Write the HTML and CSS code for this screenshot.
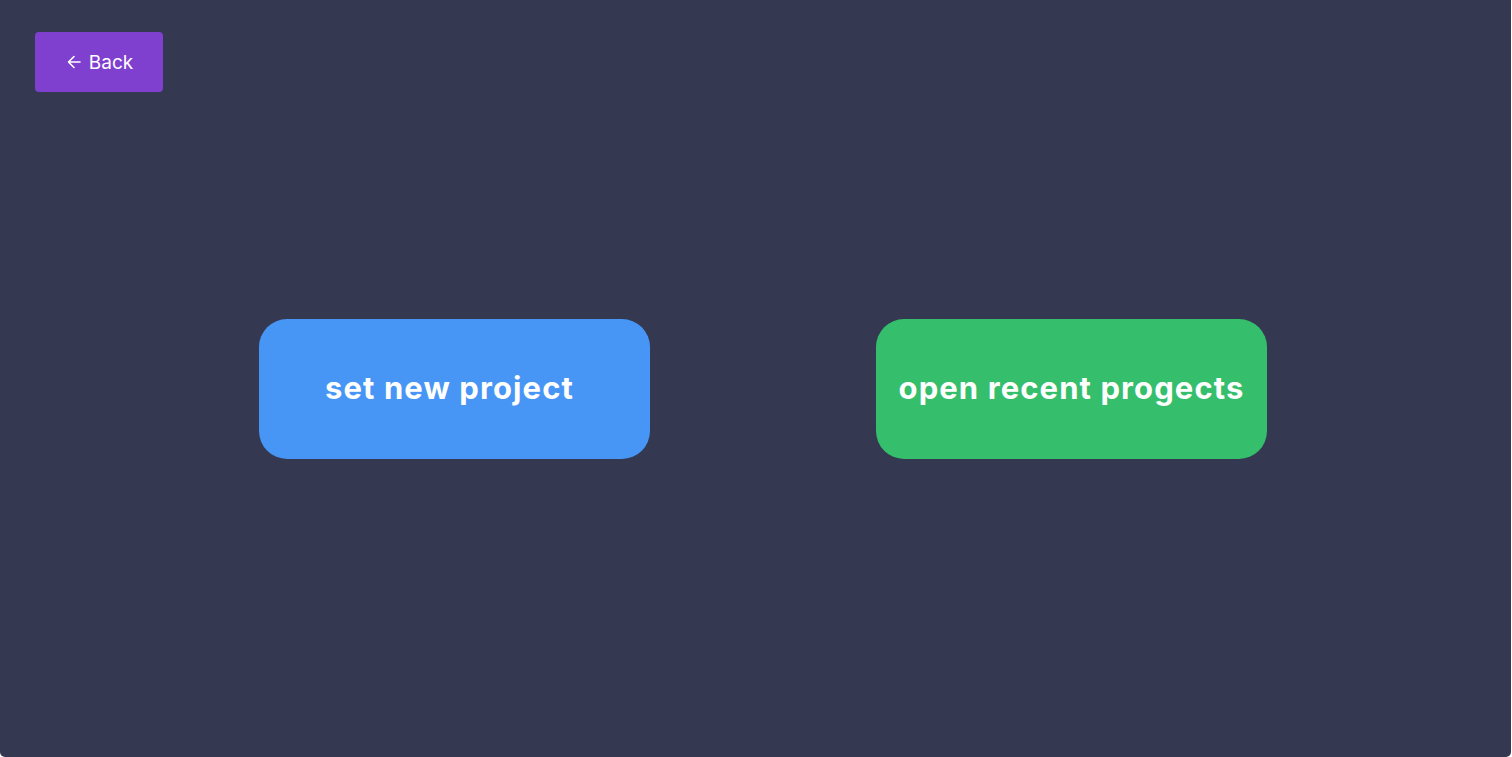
FILE: index.html
```html
<!DOCTYPE html>
<html>
<head>
<meta charset="utf-8">
<link rel="stylesheet" href="styles.css">
</head>
<body>
<div class="page">
  <header class="top">
    <button class="back">
      <svg class="arrow" width="14" height="14" viewBox="0 0 14 14"><path d="M13 7H1.5M7 1.5L1.5 7L7 12.5" fill="none" stroke="#fff" stroke-width="1.6" stroke-linecap="round" stroke-linejoin="round"/></svg>
      <span>Back</span>
    </button>
  </header>
  <main class="choices">
    <button class="choice blue">set new project</button>
    <button class="choice green">open recent progects</button>
  </main>
</div>
</body>
</html>
```
FILE: styles.css
```css
html, body {
  margin: 0;
  padding: 0;
  background: #ffffff;
}
.page {
  width: 1511px;
  height: 757px;
  background: #343850;
  border-radius: 0 0 5px 5px;
  box-sizing: border-box;
  padding: 32px 35px 0 35px;
  display: flex;
  flex-direction: column;
}
.top {
  display: flex;
}
.back {
  width: 128px;
  height: 60px;
  background: #7f3fcf;
  border: none;
  border-radius: 4px;
  color: #fff;
  font-family: Inter, "Liberation Sans", sans-serif;
  font-size: 19px;
  display: flex;
  align-items: center;
  justify-content: center;
  gap: 8px;
  padding: 0 0 0 2px;
}
.arrow {
  display: block;
}
.choices {
  display: flex;
  justify-content: flex-start;
  gap: 226px;
  padding: 227px 0 0 224px;
}
.choice {
  width: 391px;
  height: 140px;
  border: none;
  border-radius: 28px;
  color: #fff;
  font-family: Inter, "Liberation Sans", sans-serif;
  font-weight: 700;
  font-size: 31px;
  letter-spacing: 1.1px;
  padding: 0 0 4px 0;
}
.blue {
  background: #4796f6;
  padding-right: 10px;
}
.green { background: #35be6c; }
```
